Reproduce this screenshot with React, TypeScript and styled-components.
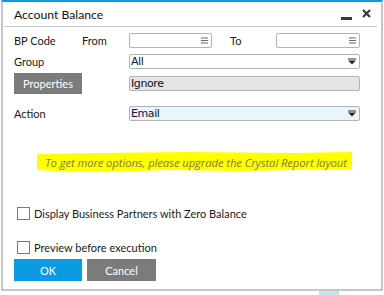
import styled, { createGlobalStyle } from "styled-components";

const GlobalStyle = createGlobalStyle`
  html, body {
    margin: 0;
    padding: 0;
    background: #ffffff;
  }
  body {
    font-family: Lato, "Noto Sans", sans-serif;
    font-size: 11px;
    color: #1a1a1a;
  }
`;

const Page = styled.div`
  width: 384px;
  height: 295px;
  overflow: hidden;
  background: #ffffff;
`;

const Window = styled.div`
  margin-left: 1px;
  width: 378px;
  height: 287px;
  border: 2px solid #c6c6c6;
  border-top: 2px solid #1495dc;
  background: #ffffff;
  display: flex;
  flex-direction: column;
`;

const TitleBar = styled.div`
  display: flex;
  align-items: center;
  height: 24px;
  margin: 0 4px 0 1px;
  padding-left: 10px;
  border-bottom: 1px solid #c8c8c8;
`;

const Title = styled.div`
  flex: 1;
  font-size: 12.2px;
  color: #111;
  padding-top: 1px;
`;

const WinControls = styled.div`
  display: flex;
  align-items: flex-start;
  gap: 10px;
  padding-right: 6px;
  height: 100%;
`;

const MinBar = styled.div`
  width: 11px;
  height: 3px;
  background: #3a3a3a;
  margin-top: 15px;
`;

const Body = styled.div`
  padding: 6px 0 0 11px;
  display: flex;
  flex-direction: column;
`;

const Row = styled.div<{ $h: number; $mt?: number }>`
  display: flex;
  align-items: center;
  height: ${(p) => p.$h}px;
  margin-top: ${(p) => p.$mt ?? 0}px;
`;

const Label = styled.div<{ $w: number; $pl?: number }>`
  box-sizing: border-box;
  width: ${(p) => p.$w}px;
  padding-left: ${(p) => p.$pl ?? 0}px;
  flex: none;
  white-space: nowrap;
`;

const Field = styled.div<{ $w: number; $bg?: string; $color?: string }>`
  position: relative;
  box-sizing: border-box;
  width: ${(p) => p.$w}px;
  height: 15px;
  border: 1px solid #b3b3b3;
  border-radius: 2px;
  background: ${(p) => p.$bg ?? "#ffffff"};
  display: flex;
  align-items: center;
  padding-left: 1px;
  font-family: "DejaVu Sans", "Liberation Sans", sans-serif;
  font-size: 11px;
  letter-spacing: -0.4px;
  color: ${(p) => p.$color ?? "#121240"};
  flex: none;
`;

const FieldIcon = styled.svg`
  position: absolute;
  right: 3px;
  top: 3px;
`;

const FlatButton = styled.div<{ $bg: string; $w: number; $h: number }>`
  box-sizing: border-box;
  width: ${(p) => p.$w}px;
  height: ${(p) => p.$h}px;
  background: ${(p) => p.$bg};
  color: #ffffff;
  display: flex;
  align-items: center;
  justify-content: center;
  flex: none;
`;

const Note = styled.div`
  margin: 30px 0 0 23px;
  position: relative;
  width: 315px;
  height: 22px;
  display: flex;
  align-items: center;
`;

const Highlight = styled.svg`
  position: absolute;
  left: 0;
  top: 0;
`;

const NoteText = styled.span`
  position: relative;
  padding-left: 8px;
  font-family: "Open Sans", "Noto Sans", sans-serif;
  font-style: italic;
  font-size: 11.3px;
  letter-spacing: -0.1px;
  color: #7d7d3c;
`;

const CheckRow = styled.label<{ $mt: number }>`
  display: flex;
  align-items: center;
  gap: 4px;
  margin: ${(p) => p.$mt}px 0 0 3px;
  height: 13px;
`;

const Box = styled.span`
  box-sizing: border-box;
  width: 13px;
  height: 13px;
  border: 1px solid #7a7a7a;
  background: #fff;
  flex: none;
`;

const ButtonBar = styled.div`
  display: flex;
  gap: 5px;
  margin-top: 5px;
`;

const Shadow = styled.div`
  margin-left: 319px;
  width: 20px;
  height: 4px;
  background: #bfe6e9;
`;

function ListIcon() {
  return (
    <FieldIcon width="7" height="7" viewBox="0 0 7 7">
      <rect x="0" y="0.5" width="7" height="1" fill="#6a6a6a" />
      <rect x="0" y="3" width="7" height="1" fill="#6a6a6a" />
      <rect x="0" y="5.5" width="7" height="1" fill="#6a6a6a" />
    </FieldIcon>
  );
}

function ArrowIcon() {
  return (
    <FieldIcon width="8" height="7" viewBox="0 0 8 7">
      <rect x="0" y="0.5" width="8" height="1" fill="#2a2a2a" />
      <path d="M0 2.5 H8 L4 6.5 Z" fill="#2a2a2a" />
    </FieldIcon>
  );
}

export default function App() {
  return (
    <Page>
      <GlobalStyle />
      <Window>
        <TitleBar>
          <Title>Account Balance</Title>
          <WinControls>
            <MinBar />
            <svg width="9" height="9" viewBox="0 0 9 9" style={{ marginTop: 7 }}>
              <path d="M1 1 L8 8 M8 1 L1 8" stroke="#3a3a3a" strokeWidth="2.2" />
            </svg>
          </WinControls>
        </TitleBar>
        <Body>
          <Row $h={15}>
            <Label $w={68}>BP Code</Label>
            <Label $w={47}>From</Label>
            <Field $w={83}>
              <ListIcon />
            </Field>
            <Label $w={64} $pl={18}>
              To
            </Label>
            <Field $w={84}>
              <ListIcon />
            </Field>
          </Row>
          <Row $h={15} $mt={6}>
            <Label $w={115}>Group</Label>
            <Field $w={231}>
              All
              <ArrowIcon />
            </Field>
          </Row>
          <Row $h={21} $mt={4}>
            <FlatButton $bg="#7b7b7b" $w={68} $h={21}>
              Properties
            </FlatButton>
            <Label $w={47} />
            <Field $w={231} $bg="#e5e5e5" $color="#111">
              Ignore
            </Field>
          </Row>
          <Row $h={15} $mt={12}>
            <Label $w={115}>Action</Label>
            <Field $w={231} $bg="#e8f5fd">
              Email
              <ArrowIcon />
            </Field>
          </Row>
          <Note>
            <Highlight width="315" height="22" viewBox="0 0 315 22">
              <path
                d="M0 3 L60 2 L150 1 L255 2 L315 1 L315 18 L260 19 L200 20 L130 19 L60 21 L20 20 L0 19 Z"
                fill="#ffff00"
              />
            </Highlight>
            <NoteText>To get more options, please upgrade the Crystal Report layout</NoteText>
          </Note>
          <CheckRow $mt={34}>
            <Box />
            Display Business Partners with Zero Balance
          </CheckRow>
          <CheckRow $mt={21}>
            <Box />
            Preview before execution
          </CheckRow>
          <ButtonBar>
            <FlatButton $bg="#0c9be2" $w={68} $h={22}>
              OK
            </FlatButton>
            <FlatButton $bg="#7b7b7b" $w={69} $h={22}>
              Cancel
            </FlatButton>
          </ButtonBar>
        </Body>
      </Window>
      <Shadow />
    </Page>
  );
}
